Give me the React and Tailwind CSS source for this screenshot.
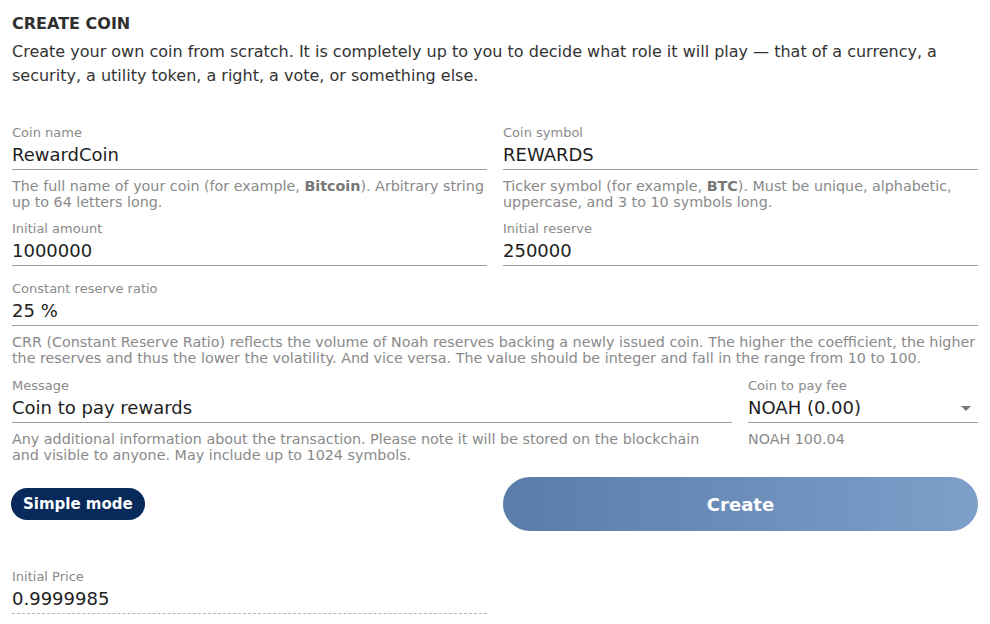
function Field({ label, value, hint, dashed, select, className = "", hintClass = "" }) {
  return (
    <div className={className}>
      <div className="text-[13px] leading-4 text-[#8a8a8a]">{label}</div>
      <div
        className={
          "relative h-[29px] text-[18px] leading-7 text-[#1e1e1e] border-b border-[#9e9e9e] " +
          (dashed ? "border-dashed border-[#b5b5b5]" : "")
        }
      >
        {value}
        {select && (
          <span className="absolute right-[7px] top-[12px] w-0 h-0 border-l-[5px] border-r-[5px] border-t-[5px] border-l-transparent border-r-transparent border-t-[#777]"></span>
        )}
      </div>
      {hint && <div className={"mt-2 text-[14.3px] leading-4 text-[#8a8a8a] " + hintClass}>{hint}</div>}
    </div>
  );
}

export default function App() {
  return (
    <div
      className="w-[990px] h-[624px] bg-white px-3 text-[#333] overflow-hidden"
      style={{ fontFamily: '"DejaVu Sans", sans-serif' }}
    >
      <h1 className="pt-3 text-[16px] leading-6 font-bold text-[#2f2f2f]">CREATE COIN</h1>
      <p className="mt-1 text-[16px] leading-6 text-[#333]">
        Create your own coin from scratch. It is completely up to you to decide what role it will play — that of a currency, a security, a utility token, a right, a vote, or something else.
      </p>

      <div className="mt-[37px] grid grid-cols-2 gap-x-4">
        <Field
          label="Coin name"
          value="RewardCoin"
          hint={
            <>
              The full name of your coin (for example, <b className="font-bold text-[#777]">Bitcoin</b>). Arbitrary string up to 64 letters long.
            </>
          }
        />
        <Field
          label="Coin symbol"
          value="REWARDS"
          hint={
            <>
              Ticker symbol (for example, <b className="font-bold text-[#777]">BTC</b>). Must be unique, alphabetic, uppercase, and 3 to 10 symbols long.
            </>
          }
        />
        <Field className="mt-[11px]" label="Initial amount" value="1000000" />
        <Field className="mt-[11px]" label="Initial reserve" value="250000" />
      </div>

      <Field
        className="mt-[15px]"
        label="Constant reserve ratio"
        value="25 %"
        hint="CRR (Constant Reserve Ratio) reflects the volume of Noah reserves backing a newly issued coin. The higher the coefficient, the higher the reserves and thus the lower the volatility. And vice versa. The value should be integer and fall in the range from 10 to 100."
      />

      <div className="mt-[12px] flex gap-4">
        <Field
          className="flex-1"
          hintClass="pr-5"
          label="Message"
          value="Coin to pay rewards"
          hint="Any additional information about the transaction. Please note it will be stored on the blockchain and visible to anyone. May include up to 1024 symbols."
        />
        <Field className="w-[230px]" label="Coin to pay fee" value="NOAH (0.00)" select hint="NOAH 100.04" />
      </div>

      <div className="mt-[14px] grid grid-cols-2 gap-x-4 items-center">
        <div>
          <button className="h-8 px-3 rounded-full bg-[#082a5a] text-white text-[15px] font-bold leading-8 -ml-px">
            Simple mode
          </button>
        </div>
        <button className="h-[54px] rounded-full bg-gradient-to-r from-[#5a7caa] to-[#7e9fca] text-white text-[18px] font-bold">
          Create
        </button>
      </div>

      <div className="mt-[38px] grid grid-cols-2 gap-x-4">
        <Field label="Initial Price" value="0.9999985" dashed />
      </div>
    </div>
  );
}
